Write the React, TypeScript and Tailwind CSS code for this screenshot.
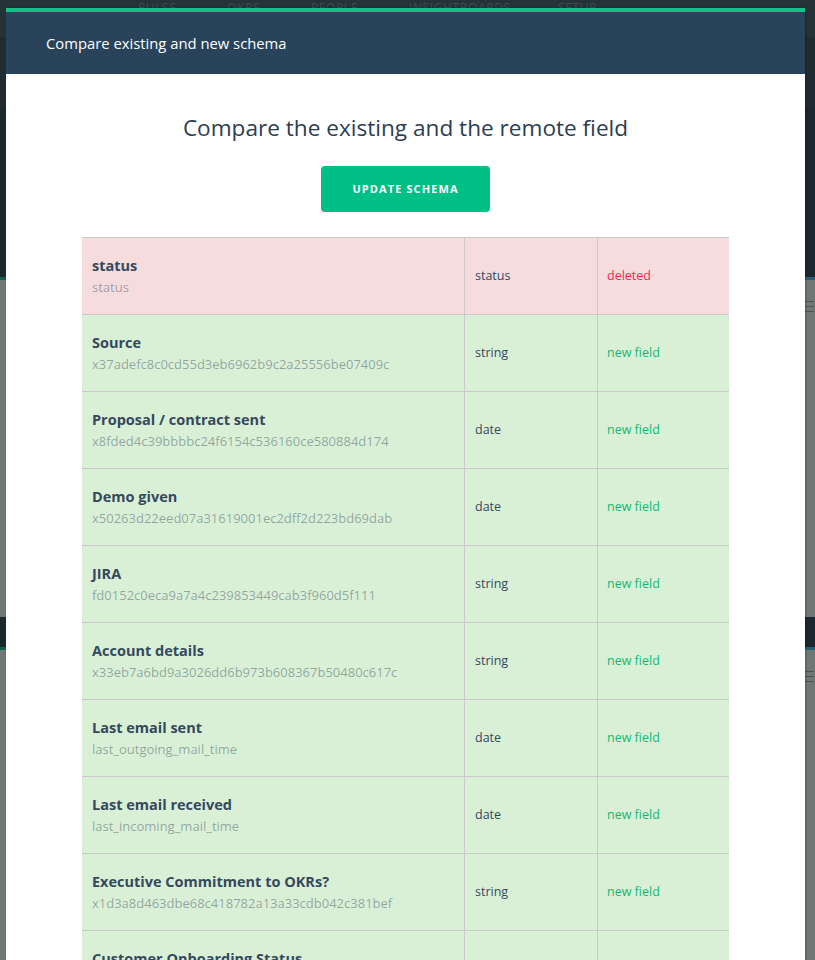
import React from "react";

type Row = { name: string; key: string; type: string; status: "deleted" | "new" };

const rows: Row[] = [
  { name: "status", key: "status", type: "status", status: "deleted" },
  { name: "Source", key: "x37adefc8c0cd55d3eb6962b9c2a25556be07409c", type: "string", status: "new" },
  { name: "Proposal / contract sent", key: "x8fded4c39bbbbc24f6154c536160ce580884d174", type: "date", status: "new" },
  { name: "Demo given", key: "x50263d22eed07a31619001ec2dff2d223bd69dab", type: "date", status: "new" },
  { name: "JIRA", key: "fd0152c0eca9a7a4c239853449cab3f960d5f111", type: "string", status: "new" },
  { name: "Account details", key: "x33eb7a6bd9a3026dd6b973b608367b50480c617c", type: "string", status: "new" },
  { name: "Last email sent", key: "last_outgoing_mail_time", type: "date", status: "new" },
  { name: "Last email received", key: "last_incoming_mail_time", type: "date", status: "new" },
  { name: "Executive Commitment to OKRs?", key: "x1d3a8d463dbe68c418782a13a33cdb042c381bef", type: "string", status: "new" },
  { name: "Customer Onboarding Status", key: "x5c1e0a7f0d3b2a4c6e8f9a1b2c3d4e5f6a7b8c9d", type: "string", status: "new" },
];

function Hamburger() {
  return (
    <div className="flex flex-col gap-[4px] items-end pr-[1px]">
      <div className="h-px w-[9px] bg-[#4b5454]" />
      <div className="h-px w-[9px] bg-[#4b5454]" />
      <div className="h-px w-[9px] bg-[#4b5454]" />
    </div>
  );
}

export default function App() {
  return (
    <div
      className="relative h-[960px] w-full overflow-hidden bg-[#6e7676]"
      style={{ fontFamily: "'Open Sans', Lato, sans-serif" }}
    >
      {/* background page (dimmed) */}
      <div className="flex flex-col">
        <div className="h-[37px] shrink-0 bg-[#253238] flex items-start">
          <div className="flex text-[12px] tracking-[0.05em] text-[#3f4b51] uppercase leading-none pt-[2px] pl-[138px]">
            <span className="w-[89px]">Pulse</span>
            <span className="w-[84px]">OKRs</span>
            <span className="w-[98px]">People</span>
            <span className="w-[149px]">Insightboards</span>
            <span>Setup</span>
          </div>
        </div>
        <div className="h-[71px] shrink-0 bg-[#202c32]" />
        <div className="h-[169px] shrink-0 bg-[#1b282e]" />
        <div className="flex h-[3px] shrink-0">
          <div className="w-1/2 bg-[#0b6452]" />
          <div className="w-1/2 bg-[#28607a]" />
        </div>
        <div className="h-[337px] shrink-0 bg-[#6e7676] flex justify-end pt-[21px]">
          <Hamburger />
        </div>
        <div className="h-[30px] shrink-0 bg-[#1b282e]" />
        <div className="flex h-[3px] shrink-0">
          <div className="w-1/2 bg-[#0b6452]" />
          <div className="w-1/2 bg-[#28607a]" />
        </div>
        <div className="h-[310px] shrink-0 bg-[#6e7676] flex justify-end pt-[21px]">
          <Hamburger />
        </div>
      </div>

      {/* modal */}
      <div className="absolute left-[6px] top-[8px] w-[799px] bottom-0 bg-white flex flex-col overflow-hidden shadow-[1px_0_2px_rgba(0,0,0,0.25)]">
        <div className="h-[4px] shrink-0 bg-[#14c187]" />
        <div className="h-[62px] shrink-0 bg-[#28435a] flex items-center pl-[40px]">
          <span className="text-white text-[14.8px]">Compare existing and new schema</span>
        </div>
        <div className="flex flex-col items-center pt-[39px] shrink-0">
          <h1 className="text-[22.6px] leading-[30px] text-[#2c3e50] font-normal">
            Compare the existing and the remote field
          </h1>
          <button className="mt-[23px] h-[46px] w-[169px] shrink-0 rounded-[4px] bg-[#00bf84] text-white text-[11px] font-bold tracking-[0.1em] uppercase">
            Update Schema
          </button>
          <div className="mt-[25px] w-[647px] flex flex-col">
            {rows.map((r, i) => {
              const bg = r.status === "deleted" ? "bg-[#f6dcdd]" : "bg-[#daf0d6]";
              return (
                <div
                  key={i}
                  className={`grid grid-cols-[382px_133px_132px] h-[77px] shrink-0 border-t border-[#c9c9c9] ${bg}`}
                >
                  <div className="flex flex-col justify-center pl-[10px] pt-[2px]">
                    <div className="text-[14.5px] leading-5 font-bold text-[#34495e] whitespace-nowrap">{r.name}</div>
                    <div className="text-[13px] leading-[22px] text-[#34495e]/45 whitespace-nowrap">{r.key}</div>
                  </div>
                  <div className="flex items-center pl-[10px] border-l border-[#c9c9c9] text-[12.5px] text-[#34495e]">
                    {r.type}
                  </div>
                  <div
                    className={`flex items-center pl-[9px] border-l border-[#c9c9c9] text-[12.5px] ${
                      r.status === "deleted" ? "text-[#ff1f4f]" : "text-[#14b874]"
                    }`}
                  >
                    {r.status === "deleted" ? "deleted" : "new field"}
                  </div>
                </div>
              );
            })}
          </div>
        </div>
      </div>
    </div>
  );
}
